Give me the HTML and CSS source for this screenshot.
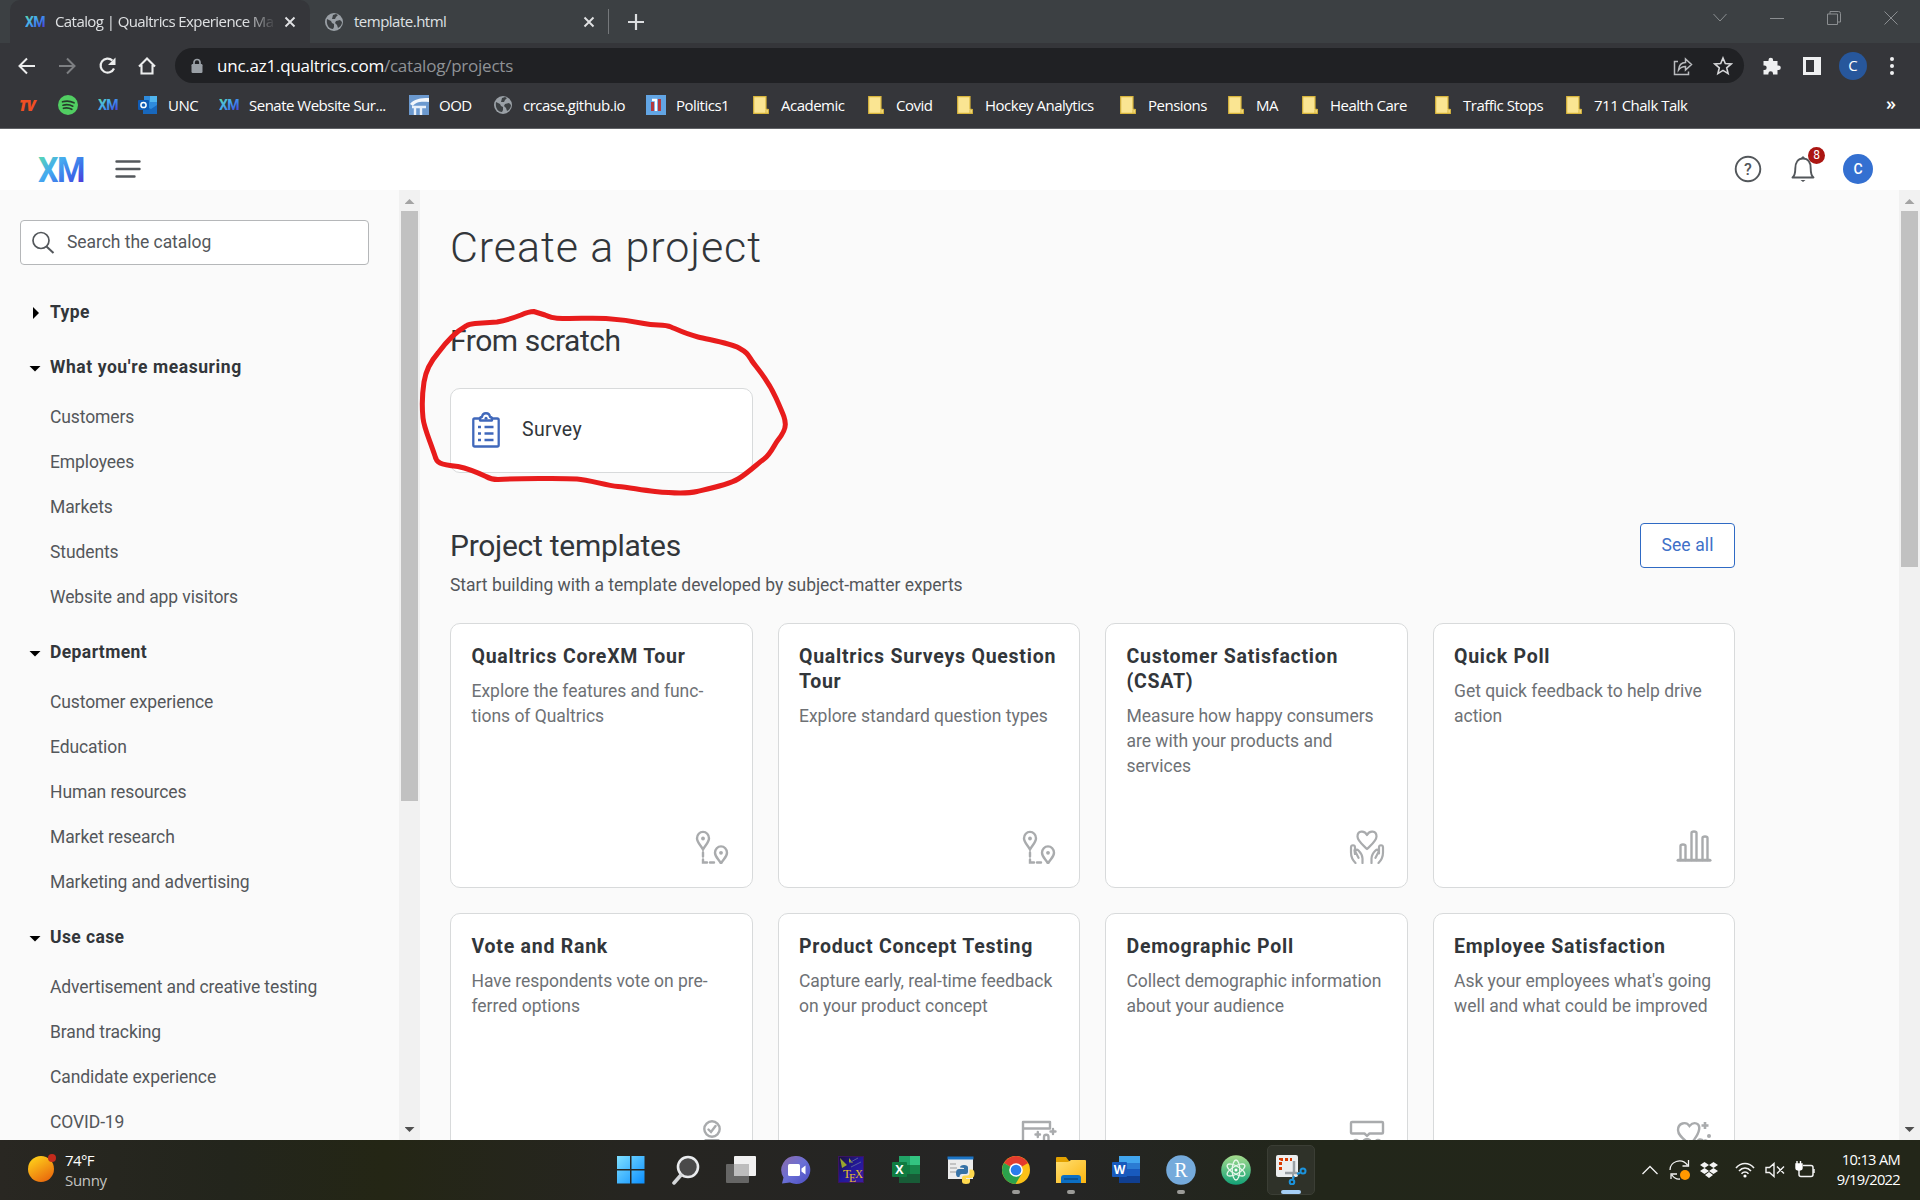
FILE: index.html
```html
<!DOCTYPE html>
<html lang="en">
<head>
<meta charset="utf-8">
<title>Catalog | Qualtrics Experience Management</title>
<link rel="stylesheet" href="styles.css">
</head>
<body>
<svg class="defs" width="0" height="0" aria-hidden="true">
  <defs>
    <linearGradient id="gXm" x1="0" y1="0" x2="1" y2="1"><stop offset="0.05" stop-color="#5ce0a6"/><stop offset="0.4" stop-color="#45aaf0"/><stop offset="0.7" stop-color="#3c6be8"/><stop offset="1" stop-color="#5d1fd0"/></linearGradient>
    <linearGradient id="gSun" x1="0.2" y1="0" x2="0.8" y2="1"><stop offset="0" stop-color="#ffd21a"/><stop offset="1" stop-color="#e8640c"/></linearGradient>
    <linearGradient id="gWin" x1="0" y1="0" x2="1" y2="1"><stop offset="0" stop-color="#7fe0ff"/><stop offset="1" stop-color="#0b8fff"/></linearGradient>
    <linearGradient id="gChat" x1="0" y1="0" x2="1" y2="1"><stop offset="0" stop-color="#8d6aa8"/><stop offset="0.5" stop-color="#6a6fd6"/><stop offset="1" stop-color="#4a4cc0"/></linearGradient>
    <linearGradient id="gAtom" x1="0" y1="0" x2="0" y2="1"><stop offset="0" stop-color="#a6dc8e"/><stop offset="1" stop-color="#12a277"/></linearGradient>
    <linearGradient id="gFold" x1="0" y1="0" x2="1" y2="1"><stop offset="0" stop-color="#ffdf73"/><stop offset="1" stop-color="#fcb50f"/></linearGradient>
    <linearGradient id="gTex" x1="0" y1="0" x2="1" y2="1"><stop offset="0" stop-color="#1a1038"/><stop offset="0.5" stop-color="#22189a"/><stop offset="1" stop-color="#3a1fa0"/></linearGradient>
    <symbol id="xm" viewBox="0 0 46 26"><text x="0" y="25.5" font-family="Roboto, sans-serif" font-weight="700" font-size="35.5" textLength="46" lengthAdjust="spacingAndGlyphs" letter-spacing="-1.6" fill="url(#gXm)">XM</text></symbol>
    <symbol id="globe" viewBox="0 0 20 20"><circle cx="10" cy="10" r="9" fill="#9aa0a6"/><path d="M3 7l4 2 1 2 2 1v3l-1 2C5 17 2 13 3 7zM9 3l3-1 2 1-2 2-1 2-3 0zM12 9l4-1 2 2c0 3-2 5-4 6l-1-3-2-2z" fill="#3c4043"/></symbol>
    <symbol id="folder" viewBox="0 0 16 18"><path d="M.7.7H13V13l2.3.5v3.8H.7z" fill="#fae592" stroke="#d9b63c" stroke-width="1.2"/><path d="M13 17v-3" stroke="#d9b63c"/></symbol>
    <symbol id="close" viewBox="0 0 12 12"><path d="M1.5 1.5l9 9M10.5 1.5l-9 9" stroke="#e0e1e3" stroke-width="1.9"/></symbol>
    <symbol id="route" viewBox="0 0 36 36"><g fill="none" stroke="#a9abad" stroke-width="2.400"><path d="M9 21.500c-2-4-6-7-6-11.300a6 6.300 0 0 1 12 0c0 4.300-4 7.300-6 11.300z"/><path d="M27 35.500c-2-4-6-6.500-6-10.800a6 6.300 0 0 1 12 0c0 4.300-4 6.800-6 10.800z"/><path d="M9 24.500v4M9 31.500v3h4M16 34.500h4" stroke-linecap="round"/></g><circle cx="9" cy="10.500" r="1.900" fill="#a9abad"/><circle cx="27" cy="24.800" r="1.900" fill="#a9abad"/></symbol>
    <symbol id="hands" viewBox="0 0 36 36"><g fill="none" stroke="#a9abad" stroke-width="2.200" stroke-linecap="round" stroke-linejoin="round"><path d="M18 21c-4-4-9.500-8-9.500-12.500C8.500 2.500 15.500 2 18 7c2.500-5 9.500-4.500 9.500 1.500C27.500 13 22 17 18 21z"/><path d="M6.500 35c-3-3-4.500-6.500-4.500-10.500v-5c0-3 4-3 4 0v6M6 26l-.5-4M13.500 35v-4.500c0-3-2-6-4-8-2-1.800-4 .3-2.600 2.300l2.600 5"/><path d="M29.500 35c3-3 4.500-6.500 4.500-10.500v-5c0-3-4-3-4 0v6M22.500 35v-4.500c0-3 2-6 4-8 2-1.800 4 .3 2.600 2.300l-2.600 5"/></g></symbol>
    <symbol id="bars" viewBox="0 0 36 36"><g fill="none" stroke="#a9abad" stroke-width="2.400" stroke-linejoin="round" stroke-linecap="round"><path d="M4.500 32V18c0-2 5-2 5 0v14M15.500 32V5c0-2 5-2 5 0v27M26.500 32V10c0-2 5-2 5 0v22"/><path d="M2 32.300h32" stroke-width="3"/></g></symbol>
    <symbol id="vote" viewBox="0 0 36 36"><g fill="none" stroke="#a9abad" stroke-width="2.400" stroke-linecap="round"><circle cx="18" cy="11" r="7.700"/><path d="M14.500 11.500l2.500 2.500 4.500-6M11.500 22.300h13"/></g></symbol>
    <symbol id="concept" viewBox="0 0 36 36"><g fill="none" stroke="#a9abad" stroke-width="2.400" stroke-linecap="round" stroke-linejoin="round"><path d="M2 36V4h27v6.500H2M23 36V19c0-3 4.500-3 4.500 0v17M14.500 16.500h4.500M16.800 14v5M29.500 13.500h5M32 11v5"/></g></symbol>
    <symbol id="demo" viewBox="0 0 36 36"><g fill="none" stroke="#a9abad" stroke-width="2.400" stroke-linejoin="round"><path d="M3 4h30q1 0 1 1v9.500q0 1-1 1H20.500L18 17.800 15.500 15.500H3q-1 0-1-1V5q0-1 1-1z"/><circle cx="7" cy="25" r="3"/><circle cx="18" cy="25" r="4"/><circle cx="29" cy="25" r="3"/></g></symbol>
    <symbol id="heart" viewBox="0 0 36 36"><path d="M14.500 27C9 22 2 18 2 12c0-7 8-9 11.500-4C18 3 24.500 5 23 12c-1 6-5 9-8.500 15z" fill="none" stroke="#a9abad" stroke-width="2.400"/><path d="M29 4v7M25.500 7.500h7" stroke="#a9abad" stroke-width="2.600"/><circle cx="33" cy="18" r="2" fill="#a9abad"/><path d="M20.500 28c0-8 6-8 6.500-4 2-3 7-1 7 4" fill="none" stroke="#a9abad" stroke-width="2.400"/></symbol>
  </defs>
</svg>

<header class="browser">
  <div class="tabstrip">
    <div class="tab tab-active">
      <svg width="20" height="13"><use href="#xm"/></svg>
      <span class="tab-title tab-fade">Catalog | Qualtrics Experience Ma</span>
      <svg class="tab-x" width="12" height="12"><use href="#close"/></svg>
    </div>
    <div class="tab tab-idle">
      <svg width="20" height="20"><use href="#globe"/></svg>
      <span class="tab-title">template.html</span>
      <svg class="tab-x" width="12" height="12"><use href="#close"/></svg>
    </div>
    <svg class="newtab" width="16" height="16"><path d="M8 0v16M0 8h16" stroke="#dcdee0" stroke-width="2.200"/></svg>
    <div class="winbtns">
      <svg width="14" height="14"><path d="M.5 3l6.500 7 6.500-7" fill="none" stroke="#8b8e91"/></svg>
      <svg width="14" height="14"><path d="M0 7.500h14" stroke="#8b8e91"/></svg>
      <svg width="14" height="14"><path d="M.5 3h10v10.500H.500zM3 3V.500h8.500q2 0 2 2V11h-3" fill="none" stroke="#8b8e91"/></svg>
      <svg width="14" height="14"><path d="M.500.500l13 13M13.500.500l-13 13" stroke="#8b8e91"/></svg>
    </div>
  </div>
  <div class="toolbar">
    <div class="nav">
      <svg width="20" height="20"><path d="M18 10H3M10 2.500L2.500 10l7.500 7.500" fill="none" stroke="#eceded" stroke-width="2"/></svg>
      <svg width="20" height="20"><path d="M2 10h15M10 2.500l7.500 7.500-7.500 7.500" fill="none" stroke="#7d7f82" stroke-width="2"/></svg>
      <svg width="20" height="20"><path d="M17 12.500a7 7 0 1 1-1.600-8" fill="none" stroke="#eceded" stroke-width="2.200"/><path d="M18.500 1.500v7.500h-7.500z" fill="#eceded"/></svg>
      <svg width="20" height="20"><path d="M2 10.500L10 2.500l8 8M4.500 9v8.500h11V9" fill="none" stroke="#eceded" stroke-width="2.100"/></svg>
    </div>
    <div class="omnibox">
      <svg width="12" height="16"><path d="M3 7V4.500a3 3 0 0 1 6 0V7" fill="none" stroke="#9aa0a6" stroke-width="1.700"/><rect x=".5" y="6" width="11" height="9" rx="1.200" fill="#9aa0a6"/></svg>
      <span class="url"><b>unc.az1.qualtrics.com</b>/catalog/projects</span>
      <svg class="share" width="20" height="20"><path d="M5 5.500H1.500v13h14v-3" fill="none" stroke="#b9bbbe" stroke-width="1.500"/><path d="M5.500 14c.5-5 3-7.500 7-7.500V3l6 5.500-6 5.500v-3.500c-3 0-5 .8-7 3.500z" fill="none" stroke="#b9bbbe" stroke-width="1.500"/></svg>
      <svg width="20" height="20"><path d="M10 2l2.300 5.500 5.900.4-4.500 3.900 1.400 5.800-5.100-3.200-5.100 3.200 1.400-5.800L1.800 7.900l5.900-.4z" fill="none" stroke="#d5d6d8" stroke-width="1.600"/></svg>
    </div>
    <div class="tools">
      <svg width="20" height="20"><path d="M1.500 5H6.500V4a2.300 2.300 0 0 1 4.600 0v1H15.500v4.500h1a2.300 2.300 0 0 1 0 4.600h-1V18.500H11v-1a2.300 2.300 0 0 0-4.600 0v1H1.500V14h1a2.200 2.200 0 0 0 0-4.400h-1z" fill="#eff0f1"/></svg>
      <svg width="20" height="20"><path d="M1 1h18v18H1zM4 4v12h8V4z" fill="#eff0f1" fill-rule="evenodd"/></svg>
      <span class="me">C</span>
      <svg width="6" height="20"><g fill="#eff0f1"><circle cx="3" cy="3" r="2"/><circle cx="3" cy="10" r="2"/><circle cx="3" cy="17" r="2"/></g></svg>
    </div>
  </div>
  <nav class="bookmarks">
    <span class="tv">TV</span>
    <span><svg width="20" height="20"><circle cx="10" cy="10" r="10" fill="#51ce62"/><path d="M4.500 6.800c4-1.200 8-.8 11.500 1M5 10.200c3.500-1 6.800-.6 9.800 1M5.500 13.300c3-.8 5.700-.4 8.300 1" fill="none" stroke="#263c2b" stroke-width="1.700" stroke-linecap="round"/></svg></span>
    <span><svg width="20" height="12"><use href="#xm"/></svg></span>
    <span><svg width="20" height="20"><rect x="6" y="1" width="13" height="13" fill="#2e8bdc"/><rect x="12" y="1" width="7" height="6" fill="#50b5ee"/><path d="M5 10l8 4 6-4v9H5z" fill="#1868bd"/><rect x="0" y="5" width="11" height="10" rx="1" fill="#0f5bb5"/><circle cx="5.500" cy="10" r="2.600" fill="none" stroke="#fff" stroke-width="1.500"/></svg>UNC</span>
    <span><svg width="20" height="12"><use href="#xm"/></svg>Senate Website Sur...</span>
    <span><svg width="20" height="20"><rect width="20" height="20" fill="#6b99cf"/><path d="M1 9c4-5 10-6 19-6v4C12 6 6 7 4 11z" fill="#f2f6fb"/><path d="M3 12h14M6 12v8M12 12v8" fill="none" stroke="#e8f0fa" stroke-width="2.400"/></svg>OOD</span>
    <span><svg width="20" height="20"><use href="#globe"/></svg>crcase.github.io</span>
    <span><svg width="20" height="20"><rect width="20" height="20" fill="#62a5e4"/><rect x="5" y="7" width="3" height="9" fill="#b33a40"/><rect x="12" y="4" width="3" height="12" fill="#b33a40"/><path d="M6 5h4v11" fill="none" stroke="#fff" stroke-width="2.400"/></svg>Politics1</span>
    <span><svg width="16" height="18"><use href="#folder"/></svg>Academic</span>
    <span><svg width="16" height="18"><use href="#folder"/></svg>Covid</span>
    <span><svg width="16" height="18"><use href="#folder"/></svg>Hockey Analytics</span>
    <span><svg width="16" height="18"><use href="#folder"/></svg>Pensions</span>
    <span><svg width="16" height="18"><use href="#folder"/></svg>MA</span>
    <span><svg width="16" height="18"><use href="#folder"/></svg>Health Care</span>
    <span><svg width="16" height="18"><use href="#folder"/></svg>Traffic Stops</span>
    <span><svg width="16" height="18"><use href="#folder"/></svg>711 Chalk Talk</span>
    <span class="more">»</span>
  </nav>
</header>

<div class="appbar">
  <svg class="logo" width="46" height="26"><use href="#xm"/></svg>
  <svg width="26" height="20"><path d="M1.500 2.500h23M1.500 10h23M1.500 17.500h18" stroke="#54585c" stroke-width="2.400" stroke-linecap="round"/></svg>
  <div class="appbar-right">
    <svg width="28" height="28"><circle cx="14" cy="14" r="12.300" fill="none" stroke="#53575b" stroke-width="1.900"/><text x="14" y="19.500" text-anchor="middle" font-family="Roboto, sans-serif" font-weight="500" font-size="16" fill="#53575b">?</text></svg>
    <div class="bell">
      <svg width="26" height="28"><path d="M2.500 22.500c2.500-2 2.800-4 2.800-9 0-6 2.700-10 7.700-10s7.700 4 7.700 10c0 5 .3 7 2.800 9z" fill="none" stroke="#53575b" stroke-width="1.900" stroke-linejoin="round"/><path d="M10.500 25h5l-2.500 2zM11 3l2-2 2 2z" fill="#53575b"/></svg>
      <span class="badge">8</span>
    </div>
    <span class="avatar">C</span>
  </div>
</div>

<div class="body">
  <aside class="sidebar">
    <div class="filters">
      <div class="search"><svg width="24" height="24"><circle cx="10" cy="9.500" r="8" fill="none" stroke="#53575b" stroke-width="1.700"/><path d="M15.500 15.500l7 6.500" stroke="#53575b" stroke-width="2"/></svg><span>Search the catalog</span></div>
      <h3 class="first"><i class="tri tri-right"></i>Type</h3>
      <h3 class="wide"><i class="tri"></i>What you're measuring</h3>
      <ul><li>Customers</li><li>Employees</li><li>Markets</li><li>Students</li><li>Website and app visitors</li></ul>
      <h3><i class="tri"></i>Department</h3>
      <ul><li>Customer experience</li><li>Education</li><li>Human resources</li><li>Market research</li><li>Marketing and advertising</li></ul>
      <h3><i class="tri"></i>Use case</h3>
      <ul><li>Advertisement and creative testing</li><li>Brand tracking</li><li>Candidate experience</li><li>COVID-19</li></ul>
    </div>
    <div class="scroll"><i class="arrow up"></i><div class="thumb thumb-side"></div><i class="arrow down"></i></div>
  </aside>
  <main>
    <div class="content">
      <h1>Create a project</h1>
      <h2 class="scratch">From scratch</h2>
      <div class="survey">
        <svg width="28" height="36"><g fill="none" stroke="#4068bb" stroke-width="2.300" stroke-linejoin="round"><path d="M8 6.500H2.500Q1.300 6.500 1.300 8v25q0 1.500 1.500 1.500h22.400q1.500 0 1.500-1.500V8q0-1.500-1.500-1.500H20V8.500H8z"/><path d="M8 7c0-2 1.500-2 2-2 .5-5 7.500-5 8 0 .5 0 2 0 2 2"/><path d="M12.500 15h9M12.500 21.500h9M12.500 28h9M6 15h3M6 21.500h3M6 28h3"/></g><circle cx="14" cy="6.300" r="1.500" fill="#4068bb"/></svg>
        <span>Survey</span>
      </div>
      <div class="row"><h2>Project templates</h2><span class="btn">See all</span></div>
      <p class="sub">Start building with a template developed by subject-matter experts</p>
      <div class="cards">
        <article><h4>Qualtrics CoreXM Tour</h4><p>Explore the features and func-<br>tions of Qualtrics</p><svg width="36" height="38"><use href="#route" width="36" height="36"/></svg></article>
        <article><h4>Qualtrics Surveys Question<br>Tour</h4><p>Explore standard question types</p><svg width="36" height="38"><use href="#route" width="36" height="36"/></svg></article>
        <article><h4>Customer Satisfaction<br>(CSAT)</h4><p>Measure how happy consumers<br>are with your products and<br>services</p><svg width="36" height="38"><use href="#hands" width="36" height="36"/></svg></article>
        <article><h4>Quick Poll</h4><p>Get quick feedback to help drive<br>action</p><svg width="36" height="38"><use href="#bars" width="36" height="36"/></svg></article>
        <article><h4>Vote and Rank</h4><p>Have respondents vote on pre-<br>ferred options</p><svg width="36" height="38"><use href="#vote" width="36" height="36"/></svg></article>
        <article><h4>Product Concept Testing</h4><p>Capture early, real-time feedback<br>on your product concept</p><svg width="36" height="38"><use href="#concept" width="36" height="36"/></svg></article>
        <article><h4>Demographic Poll</h4><p>Collect demographic information<br>about your audience</p><svg width="36" height="38"><use href="#demo" width="36" height="36"/></svg></article>
        <article><h4>Employee Satisfaction</h4><p>Ask your employees what's going<br>well and what could be improved</p><svg width="36" height="38"><use href="#heart" width="36" height="36"/></svg></article>
      </div>
    </div>
    <div class="scroll"><i class="arrow up"></i><div class="thumb thumb-main"></div><i class="arrow down"></i></div>
  </main>
</div>

<footer class="taskbar">
  <div class="weather">
    <svg width="30" height="30"><circle cx="13" cy="16" r="13" fill="url(#gSun)"/><circle cx="24" cy="5" r="4" fill="#c42b1c"/></svg>
    <div>74°F<br><em>Sunny</em></div>
  </div>
  <div class="apps">
    <span><svg width="30" height="30"><path d="M1 1h13v13H1zM15.500 1h13v13h-13zM1 15.500h13v13H1zM15.500 15.500h13v13h-13z" fill="url(#gWin)"/></svg></span>
    <span><svg width="30" height="30"><circle cx="17" cy="12" r="10" fill="#4a4a4a" stroke="#e9ebed" stroke-width="2.600"/><path d="M10 20l-7 8" stroke="#d5d7d9" stroke-width="3.500" stroke-linecap="round"/></svg></span>
    <span><svg width="32" height="30"><rect x="9" y="1" width="22" height="20" rx="1" fill="#f1f1f1"/><rect x="1" y="9" width="23" height="19" rx="1" fill="#777" opacity=".8"/><rect x="9" y="9" width="15" height="12" fill="#bdbdbd"/></svg></span>
    <span><svg width="30" height="30"><path d="M15 1a14 14 0 1 1-6 26.500L1 28.500l1.500-6A14 14 0 0 1 15 1z" fill="url(#gChat)"/><rect x="7" y="9" width="12" height="12" rx="1.500" fill="#fff"/><path d="M20.500 13.500l4-3v9l-4-3z" fill="#fff"/></svg></span>
    <span><svg width="28" height="30"><rect x="1.500" y="1.500" width="25" height="26" fill="url(#gTex)" stroke="#3b1460"/><path d="M3 3l7 7-5 3zM12 3l4 5-4-1z" fill="#98a62c"/><path d="M12 8l9-5M14 12l10-5" stroke="#59609a"/><text x="6" y="23" font-family="Liberation Serif, serif" font-size="13" fill="#e5bd2a" textLength="8" lengthAdjust="spacingAndGlyphs">T</text><text x="12" y="27" font-family="Liberation Serif, serif" font-size="13" fill="#e5bd2a" textLength="7" lengthAdjust="spacingAndGlyphs">E</text><text x="18" y="23" font-family="Liberation Serif, serif" font-size="13" fill="#e5bd2a" textLength="8" lengthAdjust="spacingAndGlyphs">X</text></svg></span>
    <span><svg width="30" height="30"><rect x="8" y="1" width="21" height="27" rx="1" fill="#107c41"/><rect x="8" y="1" width="11" height="9" fill="#21a366"/><rect x="19" y="1" width="10" height="9" fill="#33c481"/><rect x="19" y="10" width="10" height="9" fill="#17864b"/><rect x="8" y="19" width="21" height="9" fill="#185c37"/><rect x="1" y="7" width="15" height="15" rx="1" fill="#107c41"/><text x="8.500" y="19" text-anchor="middle" font-family="Open Sans, sans-serif" font-weight="700" font-size="12.500" fill="#fff">X</text></svg></span>
    <span><svg width="30" height="30"><rect x="2" y="2" width="25" height="22" fill="#ececec"/><rect x="1.500" y="1.500" width="26" height="3" fill="#1b74c5"/><path d="M4 9h6M4 13h7M4 17h6" stroke="#b5b5b5" stroke-width="1.500"/><path d="M14 12.500q0-2.500 4-2.500t4 2.500V17q0 2-2 2h-4q-2.500 0-2.500 3h-1.500q-2 0-2-4t3-4h5v-1z" fill="#3672a6"/><path d="M23.500 14.500h2q3 0 3 4t-3 4.500H20v1h4v2.500q0 2.500-4 2.500t-4-2.500V23q0-2.500 2.500-2.500h3q2 0 2-3z" fill="#ffd94e"/></svg></span>
    <span class="run"><svg width="30" height="30"><circle cx="15" cy="15" r="14" fill="#fbc116"/><path d="M15 15L2.900 8A14 14 0 0 1 27.100 8z" fill="#e33b2e"/><path d="M15 15L2.900 8A14 14 0 0 0 14.500 29l6-10z" fill="#2ba24c"/><circle cx="15" cy="15" r="6.800" fill="#fff"/><circle cx="15" cy="15" r="5.300" fill="#2a7cec"/></svg></span>
    <span class="run"><svg width="32" height="30"><path d="M1 3q0-1 1-1h9l3 4v5H1z" fill="#e2a100"/><path d="M1 7h12l3-2h14q1 0 1 1v22H1z" fill="url(#gFold)"/><path d="M6 28v-5q0-3 3-3h14q3 0 3 3v5z" fill="#0c6fc4"/><path d="M9 24h14" stroke="#0a4a86" stroke-width="1.500"/></svg></span>
    <span><svg width="30" height="30"><rect x="8" y="1" width="21" height="27" rx="1" fill="#185abd"/><rect x="8" y="1" width="21" height="8" fill="#41a5ee"/><rect x="8" y="8" width="21" height="6" fill="#2b7cd3"/><rect x="8" y="21" width="21" height="7" fill="#103f91"/><rect x="1" y="7" width="15" height="15" rx="1" fill="#185abd"/><text x="8.500" y="19" text-anchor="middle" font-family="Open Sans, sans-serif" font-weight="700" font-size="12" fill="#fff">W</text></svg></span>
    <span class="run"><svg width="30" height="30"><circle cx="15" cy="15" r="14.800" fill="#75aadb"/><text x="15" y="21.500" text-anchor="middle" font-family="Liberation Serif, serif" font-size="20" fill="#fff">R</text></svg></span>
    <span><svg width="30" height="30"><circle cx="15" cy="15" r="14.800" fill="url(#gAtom)"/><g fill="none" stroke="#e6f7ea" stroke-width="1.300"><ellipse cx="15" cy="15" rx="3.800" ry="10"/><ellipse cx="15" cy="15" rx="3.800" ry="10" transform="rotate(60 15 15)"/><ellipse cx="15" cy="15" rx="3.800" ry="10" transform="rotate(-60 15 15)"/></g><circle cx="15" cy="15" r="1.500" fill="#fff"/></svg></span>
    <span class="active"><svg width="32" height="30"><rect x="1" y="0" width="22" height="22" rx="2" fill="#eceeef"/><path d="M5.500 15V4.500H17" fill="none" stroke="#d83b01" stroke-width="3" stroke-dasharray="3 2"/><path d="M19 6v12M10 18h12" stroke="#9aa0a4" stroke-width="2.500"/><path d="M18 18l0 6M19 18h6" stroke="#9aa0a4" stroke-width="2"/><circle cx="28" cy="16" r="2.500" fill="none" stroke="#1c93dc" stroke-width="2"/><circle cx="17" cy="27" r="2.300" fill="none" stroke="#1c93dc" stroke-width="2"/><path d="M25 18l-3 1M18 24l1-3" stroke="#1c93dc" stroke-width="2"/></svg></span>
  </div>
  <div class="tray">
    <svg width="16" height="10"><path d="M.500 9L8 1.500 15.500 9" fill="none" stroke="#f2f2f2" stroke-width="1.300"/></svg>
    <svg width="22" height="22"><path d="M1 11C1 3 12-2 18.500 6M19.500 1v6h-6M2 20v-5h6M3 16c2 3 5 4.500 8 4" fill="none" stroke="#f2f2f2" stroke-width="1.300"/><circle cx="16" cy="16" r="5" fill="#ff9800"/></svg>
    <svg width="18" height="16"><path d="M4.500 0L9 3 4.500 6 0 3zM13.500 0L18 3 13.500 6 9 3zM4.500 6L9 9l-4.500 3L0 9zM13.500 6L18 9l-4.500 3L9 9zM9 10l4 3-4 3-4-3z" fill="#f4f4f4"/></svg>
    <svg width="20" height="16"><g fill="none" stroke="#f2f2f2" stroke-width="1.600"><path d="M1 6c5-6 13-6 18 0M4 9c3.500-4 8.500-4 12 0M6.500 11.700c2-2.200 5-2.200 7 0"/></g><circle cx="10" cy="14" r="1.600" fill="#fff"/></svg>
    <svg width="20" height="16"><path d="M1 5.500h3.500L9 1.500v13l-4.500-4H1zM12 4.500l7 7M19 4.500l-7 7" fill="none" stroke="#f2f2f2" stroke-width="1.400"/></svg>
    <svg width="20" height="18"><path d="M8 4.500h8q2 0 2 2v7q0 2-2 2H6q-2 0-2-2V9" fill="none" stroke="#f2f2f2" stroke-width="1.500"/><path d="M1 3h6v4q0 2-3 2T1 7zM2 0v3M5.500 0v3M19 8v4" stroke="#fff" stroke-width="1.400" fill="#fff"/></svg>
    <div class="clock">10:13 AM<br>9/19/2022</div>
  </div>
</footer>

<svg class="scribble" width="390" height="200" viewBox="410 305 390 200"><path d="M533.700 311.500L545 315Q552 318 557 318.200C575 319 590 317.500 606 318.500S632 321 644 323.500S664 324 671 327S686 334 698 337S730 343 739 348S748 355 752 361S767 378 776 398S785 419 785.300 424S782 435 778 440S771 454 764 459S748 473 738 479S708 489 697 491.500S670 493 655 491.500S630 487.500 618 486.500S590 480 577 479S515 478.500 498 479.500Q491 479.500 486 476.500Q470 469 458 466.500Q444 465 440 463Q436 461 435 456C429 438 424 428 423 418S422 395 424 382S431 361 438 353Q452 334 466 326Q469 324 475 323.500L497 322Q508 320 521 315Q529 311.500 533.700 311.500z"/></svg>
</body>
</html>
```
FILE: styles.css
```css
* { box-sizing: border-box; }
body { margin: 0; width: 1920px; height: 1200px; overflow: hidden; position: relative; display: flex; flex-direction: column; font-family: Roboto, "Liberation Sans", sans-serif; background: #fafafa; color: #32363a; }
h1, h2, h3, h4, p, ul { margin: 0; padding: 0; font-weight: 400; }
ul { list-style: none; }
svg { display: block; flex: none; }
.defs { position: absolute; }

/* browser chrome */
.browser { height: 129px; background: #35363a; border-bottom: 1px solid #606266; font-family: "Open Sans", "Noto Sans", sans-serif; display: flex; flex-direction: column; flex: none; }
.tabstrip { height: 43px; background: #3c4043; display: flex; align-items: center; padding-left: 10px; }
.tab { display: flex; align-items: center; height: 43px; gap: 10px; color: #dfe1e3; font-size: 15px; letter-spacing: -0.5px; white-space: nowrap; }
.tab-active { width: 300px; background: #35363a; border-radius: 10px 10px 0 0; padding: 0 14px 0 15px; }
.tab-idle { width: 299px; padding: 0 14px 0 14px; position: relative; letter-spacing: -0.5px; }
.tab-idle::after { content: ""; width: 1px; height: 25px; background: #75787b; position: absolute; right: 0; top: 9px; }
.tab-title { flex: 1; padding-bottom: 2px; }
.tab-fade { width: 0; letter-spacing: -0.58px; -webkit-mask-image: linear-gradient(90deg, #000 87%, transparent 101%); mask-image: linear-gradient(90deg, #000 87%, transparent 101%); }
.newtab { margin-left: 19px; }
.winbtns { margin-left: auto; display: flex; gap: 43px; padding: 0 22px 7px 0; }
.toolbar { height: 45px; display: flex; align-items: center; padding-left: 17px; }
.nav { display: flex; gap: 20px; width: 158px; }
.omnibox { width: 1569px; height: 35px; background: #202124; border-radius: 18px; display: flex; align-items: center; padding: 0 11px 0 16px; font-size: 17px; }
.url { margin-left: 14px; color: #8f9296; letter-spacing: -0.23px; }
.url b { color: #fff; font-weight: 400; }
.share { margin-left: auto; margin-right: 20px; }
.tools { display: flex; align-items: center; margin-left: 18px; }
.tools svg + svg { margin-left: 20px; }
.me { width: 28px; height: 28px; border-radius: 50%; background: #27579c; color: #fff; font-size: 15px; line-height: 27px; text-align: center; margin: 0 22px 0 17px; }
.bookmarks { height: 36px; display: grid; grid-template-columns: 39px 40px 40px 81px 190px 84px 153px 107px 115px 89px 163px 108px 74px 133px 131px 320px auto; padding-left: 19px; color: #fff; font-size: 15px; letter-spacing: -0.5px; align-items: center; white-space: nowrap; line-height: 18px; padding-bottom: 2px; }
.bookmarks span { display: flex; align-items: center; gap: 10px; }
.bookmarks span:nth-child(n+9) { gap: 12px; }
.bookmarks .tv { color: #f04f23; font-weight: 800; font-style: italic; font-size: 15px; line-height: 24px; letter-spacing: -0.8px; }
.bookmarks .more { font-size: 18px; font-weight: 600; line-height: 20px; padding-bottom: 4px; }

/* product header */
.appbar { height: 61px; background: #fff; display: flex; align-items: center; padding: 20px 47px 1px 38px; flex: none; }
.appbar > svg + svg { margin-left: 31px; }
.appbar-right { margin-left: auto; display: flex; align-items: center; }
.bell { position: relative; margin: 0 27px 0 28px; }
.badge { position: absolute; left: 18px; top: -8px; width: 17px; height: 17px; border-radius: 50%; background: #ab1612; color: #fff; font-size: 12px; line-height: 17px; text-align: center; }
.avatar { width: 30px; height: 30px; border-radius: 50%; background: #3470d1; color: #fff; font-size: 14px; font-weight: 500; line-height: 30px; text-align: center; }

/* catalog */
.body { height: 950px; display: flex; flex: none; overflow: hidden; }
.sidebar { width: 420px; display: flex; height: 950px; overflow: hidden; flex: none; }
.filters { width: 399px; padding: 30px 0 0 20px; font-size: 17.5px; color: #54575b; letter-spacing: -0.1px; }
.search { width: 349px; height: 45px; border: 1px solid #b5b7b9; border-radius: 4px; background: #fff; display: flex; align-items: center; padding-left: 10px; gap: 12px; letter-spacing: -0.05px; }
.search span { padding-bottom: 2px; }
h3 { height: 45px; margin: 9px 0 6px; display: flex; align-items: center; font-size: 17.5px; font-weight: 700; color: #32363a; padding-left: 9px; gap: 9px; letter-spacing: 0.4px; }
h3.first { margin: 24px 0 10px; }
h3.wide { letter-spacing: 0.58px; }
.tri { width: 12px; height: 6px; background: #000; clip-path: polygon(0 0, 100% 0, 50% 100%); margin-top: 4px; }
.tri-right { width: 6px; height: 12px; clip-path: polygon(0 0, 100% 50%, 0 100%); margin: 3px 2px 0 4px; }
li { height: 45px; line-height: 45px; padding-left: 30px; white-space: nowrap; }
.scroll { width: 21px; height: 950px; background: #f1f1f1; display: flex; flex-direction: column; align-items: center; padding: 9px 0 8px; flex: none; }
.arrow { width: 10px; height: 5px; background: #505050; flex: none; }
.up { clip-path: polygon(0 100%, 50% 0, 100% 100%); background: #a3a3a3; }
.down { clip-path: polygon(0 0, 100% 0, 50% 100%); margin-top: auto; }
.thumb { width: 17px; background: #c1c1c1; margin-top: 7px; flex: none; }
.thumb-side { height: 590px; }
.thumb-main { height: 356px; }
main { flex: 1; display: flex; height: 950px; overflow: hidden; }
.content { flex: 1; padding: 32px 164px 0 30px; }
h1 { font-size: 43px; line-height: 50px; font-weight: 300; letter-spacing: 0.9px; }
h2 { font-size: 30px; line-height: 36px; letter-spacing: -0.35px; }
.scratch { margin-top: 51px; letter-spacing: -0.45px; }
.row h2 { letter-spacing: -0.28px; }
.survey { margin-top: 29px; width: 303px; height: 85px; border: 1px solid #d8dadb; border-radius: 10px; background: #fff; display: flex; align-items: center; padding: 0 0 2px 21px; gap: 22px; font-size: 19.5px; letter-spacing: 0.35px; }
.row { height: 45px; margin-top: 50px; display: flex; align-items: center; justify-content: space-between; }
.btn { width: 95px; height: 45px; border: 1px solid #2f6ac4; border-radius: 4px; background: #fff; color: #4070c8; font-size: 17.5px; line-height: 42px; text-align: center; letter-spacing: 0.1px; }
.sub { margin-top: 5px; font-size: 17.5px; line-height: 25px; color: #54575b; letter-spacing: -0.03px; }
.cards { margin-top: 25px; display: grid; grid-template-columns: repeat(4, 302.5px); gap: 25px; }
article { height: 265px; border: 1px solid #d8dadb; border-radius: 10px; background: #fff; padding: 20px 21px 21px 20.5px; display: flex; flex-direction: column; white-space: nowrap; }
h4 { font-size: 19.5px; line-height: 25px; font-weight: 700; letter-spacing: 0.75px; }
article p { margin-top: 10px; font-size: 17.5px; line-height: 25px; color: #6e7175; letter-spacing: -0.02px; }
article svg { margin: auto 1px 0 auto; overflow: visible; }

/* taskbar */
.taskbar { height: 60px; background: linear-gradient(90deg, #292722 0, #23251c 12%, #242615 20%, #262521 33%, #252525 55%, #22261a 68%, #232619 100%); display: grid; grid-template-columns: 602px 1fr 300px; flex: none; color: #fff; font-family: "Open Sans", "Noto Sans", sans-serif; font-size: 15px; line-height: 20px; }
.weather { display: flex; gap: 7px; padding: 10px 0 0 28px; letter-spacing: -0.6px; }
.weather svg { margin-top: 3px; }
.weather em { font-style: normal; color: #c4c4c2; letter-spacing: -0.3px; }
.apps { display: flex; gap: 7px; padding-top: 5px; padding-left: 5px; }
.apps span { width: 48px; height: 50px; border-radius: 5px; display: flex; align-items: center; justify-content: center; position: relative; flex: none; }
.active { background: #2f3229; border: 1px solid #3b3e35; }
.run::after, .active::after { content: ""; position: absolute; bottom: 1px; left: 20px; width: 8px; height: 4px; border-radius: 2px; background: #9b9b98; }
.active::after { left: 13px; width: 20px; background: #a5cff5; bottom: 0; }
.tray { display: flex; align-items: center; padding: 0 20px 0 22px; }
.tray svg:nth-child(2) { margin-left: 11px; }
.tray svg:nth-child(3) { margin-left: 9px; }
.tray svg:nth-child(4) { margin-left: 17px; }
.tray svg:nth-child(5) { margin-left: 10px; }
.tray svg:nth-child(6) { margin-left: 10px; }
.clock { margin: -2px 0 0 auto; text-align: right; letter-spacing: -0.7px; font-size: 14.7px; }

/* hand-drawn marker */
.scribble { position: absolute; left: 410px; top: 305px; }
.scribble path { fill: none; stroke: #e81c1c; stroke-width: 5; stroke-linejoin: round; }
```
